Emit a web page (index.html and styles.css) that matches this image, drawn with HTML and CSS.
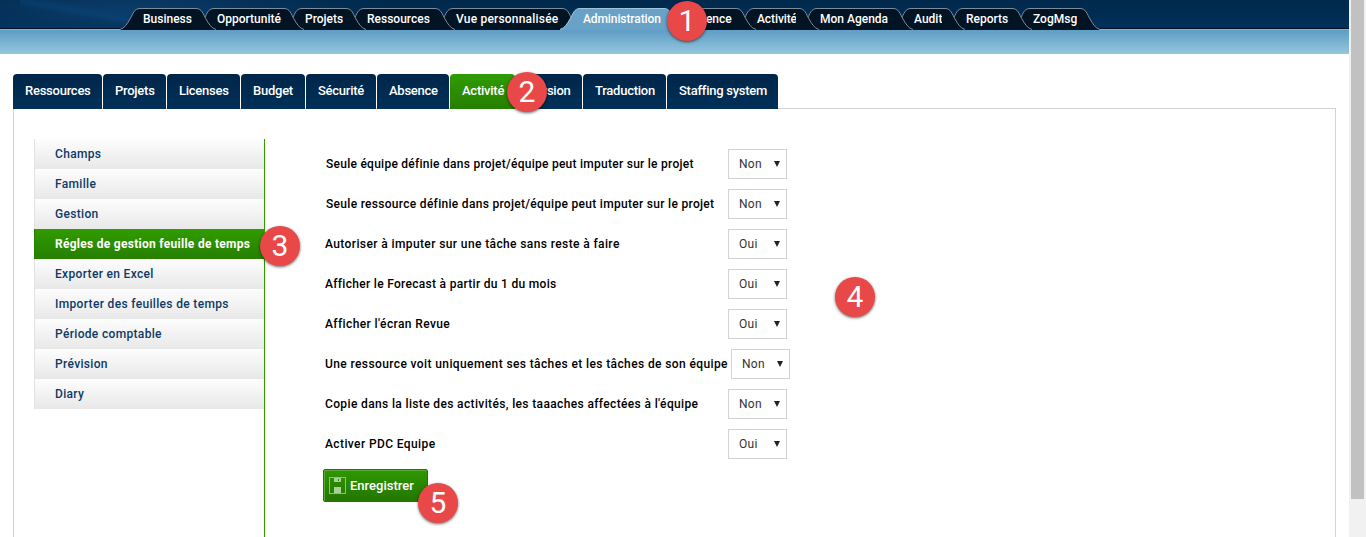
FILE: index.html
```html
<!DOCTYPE html>
<html lang="fr">
<head>
<meta charset="utf-8">
<title>Administration</title>
<link rel="stylesheet" href="styles.css">
</head>
<body>
<svg class="defs" width="0" height="0">
  <symbol id="cap" viewBox="0 0 23 22">
    <path class="fill" d="M0 22V21.5C5 20 7 16 10 11 13 6 14 .5 20 .5H23V22Z"/>
    <path class="line" d="M0 21.5C5 20 7 16 10 11 13 6 14 .5 20 .5H23"/>
  </symbol>
</svg>
<div class="page">
  <header class="top">
    <nav class="mainnav">
      <a class="mtab w50"><svg class="cap"><use href="#cap"/></svg><span>Business</span><svg class="cap flip"><use href="#cap"/></svg></a>
      <a class="mtab w64"><svg class="cap"><use href="#cap"/></svg><span>Opportunité</span><svg class="cap flip"><use href="#cap"/></svg></a>
      <a class="mtab w38"><svg class="cap"><use href="#cap"/></svg><span>Projets</span><svg class="cap flip"><use href="#cap"/></svg></a>
      <a class="mtab w65"><svg class="cap"><use href="#cap"/></svg><span>Ressources</span><svg class="cap flip"><use href="#cap"/></svg></a>
      <a class="mtab w103"><svg class="cap"><use href="#cap"/></svg><span class="wider">Vue personnalisée</span><svg class="cap flip"><use href="#cap"/></svg></a>
      <a class="mtab w78 current"><svg class="cap"><use href="#cap"/></svg><span class="tighter">Administration</span><svg class="cap flip"><use href="#cap"/></svg></a>
      <a class="mtab w48"><svg class="cap"><use href="#cap"/></svg><span>Absence</span><svg class="cap flip"><use href="#cap"/></svg></a>
      <a class="mtab w39"><svg class="cap"><use href="#cap"/></svg><span class="tighter">Activité</span><svg class="cap flip"><use href="#cap"/></svg></a>
      <a class="mtab w70"><svg class="cap"><use href="#cap"/></svg><span>Mon Agenda</span><svg class="cap flip"><use href="#cap"/></svg></a>
      <a class="mtab w28"><svg class="cap"><use href="#cap"/></svg><span>Audit</span><svg class="cap flip"><use href="#cap"/></svg></a>
      <a class="mtab w43"><svg class="cap"><use href="#cap"/></svg><span>Reports</span><svg class="cap flip"><use href="#cap"/></svg></a>
      <a class="mtab w44"><svg class="cap"><use href="#cap"/></svg><span>ZogMsg</span><svg class="cap flip"><use href="#cap"/></svg></a>
    </nav>
  </header>
  <div class="subbar"></div>
  <nav class="tabs">
    <a class="tab t89">Ressources</a>
    <a class="tab t63">Projets</a>
    <a class="tab t73">Licenses</a>
    <a class="tab t64">Budget</a>
    <a class="tab t70">Sécurité</a>
    <a class="tab t72">Absence</a>
    <a class="tab t65 active">Activité</a>
    <a class="tab t66">Version</a>
    <a class="tab t83">Traduction</a>
    <a class="tab t111">Staffing system</a>
  </nav>
  <main class="panel">
    <aside class="side">
      <a>Champs</a>
      <a>Famille</a>
      <a>Gestion</a>
      <a class="selected">Régles de gestion feuille de temps</a>
      <a>Exporter en Excel</a>
      <a>Importer des feuilles de temps</a>
      <a>Période comptable</a>
      <a>Prévision</a>
      <a>Diary</a>
    </aside>
    <section class="form">
      <div class="row inset snug"><label>Seule équipe définie dans projet/équipe peut imputer sur le projet</label><div class="select"><span>Non</span><i></i></div></div>
      <div class="row inset"><label>Seule ressource définie dans projet/équipe peut imputer sur le projet</label><div class="select"><span>Non</span><i></i></div></div>
      <div class="row airy"><label>Autoriser à imputer sur une tâche sans reste à faire</label><div class="select"><span>Oui</span><i></i></div></div>
      <div class="row"><label>Afficher le Forecast à partir du 1 du mois</label><div class="select"><span>Oui</span><i></i></div></div>
      <div class="row airy"><label>Afficher l'écran Revue</label><div class="select"><span>Oui</span><i></i></div></div>
      <div class="row airy long"><label>Une ressource voit uniquement ses tâches et les tâches de son équipe</label><div class="select"><span>Non</span><i></i></div></div>
      <div class="row mid"><label>Copie dans la liste des activités, les taaaches affectées à l'équipe</label><div class="select"><span>Non</span><i></i></div></div>
      <div class="row airy"><label>Activer PDC Equipe</label><div class="select"><span>Oui</span><i></i></div></div>
      <button class="save">
        <svg width="17" height="17" viewBox="0 0 17 17" shape-rendering="crispEdges"><path d="M.5 .5H16.5V16.5H.5Z" fill="none" stroke="#8fc076"/><path d="M5 1H12V6H5ZM5 10H12V16H5Z" fill="#a9d096"/><path d="M9 2H10V4H9ZM5 5H12V6H5Z" fill="#2a8200"/></svg>
        <span>Enregistrer</span>
      </button>
    </section>
  </main>
</div>
<div class="scrollbar"><div class="thumb"></div></div>
<div class="badge b1">1</div>
<div class="badge b2">2</div>
<div class="badge b3">3</div>
<div class="badge b4">4</div>
<div class="badge b5">5</div>
</body>
</html>
```
FILE: styles.css
```css
* { box-sizing: border-box; }
body {
  margin: 0;
  width: 1366px;
  height: 537px;
  overflow: hidden;
  display: flex;
  position: relative;
  background: #fff;
  font: 500 12px Roboto, "Liberation Sans", sans-serif;
}
.defs { position: absolute; }
.page { width: 1349px; height: 537px; display: flex; flex-direction: column; }

/* Header */
.top {
  height: 30px;
  padding: 8px 0 0 120px;
  border-bottom: 1px solid #8fb2cc;
  background:
    linear-gradient(#0000 28px, #001426 28px),
    linear-gradient(190deg, #0000 36%, #0a4a8066 50%, #0000 62%) 20px 0 / 150px 28px no-repeat,
    radial-gradient(ellipse 260px 44px at 130px 10px, #0b3c69 0, #0a386490 45%, #0000 100%),
    linear-gradient(#00294c, #00305a);
}
.mainnav { display: flex; height: 22px; }
.mtab {
  display: flex;
  flex: none;
  height: 22px;
  color: #fff;
  --bg: #021424;
  --edge: #7d8c99;
}
.mtab + .mtab { margin-left: -22px; }
.mtab span {
  flex: 1;
  min-width: 0;
  height: 22px;
  line-height: 21px;
  white-space: nowrap;
  background: var(--bg);
  border-top: 1px solid var(--edge);
}
.mtab .wider { letter-spacing: .2px; }
.mtab .tighter { letter-spacing: -.1px; }
.cap { flex: none; width: 23px; height: 22px; }
.fill { fill: var(--bg); }
.line { fill: none; stroke: var(--edge); }
.flip { transform: scaleX(-1); }
.mtab.current { --bg: #68a2c6; --edge: #a5c3d8; z-index: 20; }
.mtab:nth-child(1) { z-index: 12; }
.mtab:nth-child(2) { z-index: 11; }
.mtab:nth-child(3) { z-index: 10; }
.mtab:nth-child(4) { z-index: 9; }
.mtab:nth-child(5) { z-index: 8; }
.mtab:nth-child(7) { z-index: 6; }
.mtab:nth-child(8) { z-index: 5; }
.mtab:nth-child(9) { z-index: 4; }
.mtab:nth-child(10) { z-index: 3; }
.mtab:nth-child(11) { z-index: 2; }
.mtab:nth-child(12) { z-index: 1; }
.w50 { width: 96px; }
.w64 { width: 110px; }
.w38 { width: 84px; }
.w65 { width: 111px; }
.w103 { width: 149px; }
.w78 { width: 124px; }
.w48 { width: 94px; }
.w39 { width: 85px; }
.w70 { width: 116px; }
.w28 { width: 74px; }
.w43 { width: 89px; }
.w44 { width: 90px; }
.subbar { height: 24px; background: linear-gradient(#5e9dc6, #95c7dc); }

/* Section tabs */
.tabs { display: flex; gap: 1px; height: 35px; margin: 20px 0 0 13px; z-index: 1; }
.tab {
  flex: none;
  height: 35px;
  padding-left: 12px;
  line-height: 34px;
  letter-spacing: -.25px;
  white-space: nowrap;
  font-size: 13px;
  color: #fff;
  border-radius: 4px 4px 0 0;
  background: linear-gradient(#00264a, #003058);
}
.tab.active { background: linear-gradient(#309c00, #267f00); }
.t89 { width: 89px; }
.t63 { width: 63px; }
.t73 { width: 73px; }
.t64 { width: 64px; }
.t70 { width: 70px; }
.t72 { width: 72px; }
.t65 { width: 65px; }
.t66 { width: 66px; }
.t83 { width: 83px; }
.t111 { width: 111px; }

/* Content panel */
.panel {
  flex: 1;
  display: flex;
  width: 1323px;
  margin: -1px 0 0 13px;
  padding: 30px 0 0 20px;
  border: 1px solid #d3d3d3;
  border-bottom: 0;
}
.side { width: 231px; border-right: 1px solid #309c00; letter-spacing: .33px; }
.side a {
  display: block;
  height: 30px;
  padding-left: 20px;
  line-height: 31px;
  color: #0d3a67;
  white-space: nowrap;
  border-left: 1px solid #e2e2e2;
  background: linear-gradient(#fdfdfd, #e8e8e8);
}
.side a.selected {
  color: #fff;
  font-weight: 700;
  letter-spacing: .28px;
  border-color: #267f00;
  background: linear-gradient(#309c00, #267f00);
}
.form { padding: 10px 0 0 58px; display: flex; flex-direction: column; align-items: flex-start; }
.row { display: flex; height: 40px; color: #000; letter-spacing: .3px; }
.row label { width: 405px; padding-left: 2px; line-height: 31px; white-space: nowrap; }
.row.inset label { padding-left: 3px; }
.row.long label { width: 408px; }
.row.snug label { letter-spacing: .26px; }
.row.mid label { letter-spacing: .36px; }
.row.airy label { letter-spacing: .39px; }
.select {
  width: 59px;
  height: 30px;
  padding: 0 6px 0 10px;
  display: flex;
  align-items: center;
  justify-content: space-between;
  border: 1px solid #d3d3d3;
  font-weight: 400;
  color: #333;
  line-height: 29px;
}
.select span { height: 28px; }
.select i {
  border: 3px solid transparent;
  border-top: 6px solid #222;
  border-bottom: 0;
}
.save {
  width: 105px;
  height: 33px;
  padding: 0 0 0 5px;
  display: flex;
  align-items: center;
  gap: 4px;
  border: 1px solid #237500;
  border-radius: 2px;
  box-shadow: inset 1px 1px 0 #56ac35;
  background: linear-gradient(#2f9700, #247600);
  font: 500 13px Roboto, "Liberation Sans", sans-serif;
  color: #fff;
}
.save svg { flex: none; }

/* Scrollbar */
.scrollbar { width: 17px; height: 537px; padding-left: 2px; background: #f1f1f1; }
.thumb { width: 13px; height: 499px; background: #c1c1c1; }

/* Numbered callouts */
.badge {
  position: absolute;
  z-index: 30;
  width: 40px;
  height: 40px;
  border-radius: 50%;
  background: #e94849;
  box-shadow: 0 1px 3px #0009;
  color: #fff;
  font: 400 30px/40px Roboto, "Liberation Sans", sans-serif;
  text-align: center;
}
.b1 { left: 667px; top: 1px; }
.b2 { left: 507px; top: 72px; }
.b3 { left: 260px; top: 226px; }
.b4 { left: 835px; top: 277px; }
.b5 { left: 418px; top: 483px; }
```
